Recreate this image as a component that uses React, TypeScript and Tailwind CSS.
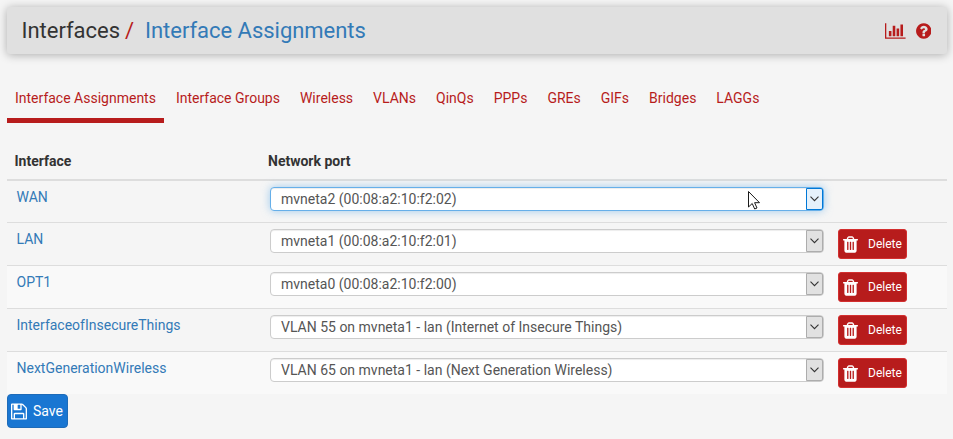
import React from 'react';

type Row = { name: string; port: string; focused?: boolean; deletable?: boolean; striped?: boolean };

const tabs = ['Interface Assignments', 'Interface Groups', 'Wireless', 'VLANs', 'QinQs', 'PPPs', 'GREs', 'GIFs', 'Bridges', 'LAGGs'];

const rows: Row[] = [
  { name: 'WAN', port: 'mvneta2 (00:08:a2:10:f2:02)', focused: true },
  { name: 'LAN', port: 'mvneta1 (00:08:a2:10:f2:01)', deletable: true },
  { name: 'OPT1', port: 'mvneta0 (00:08:a2:10:f2:00)', deletable: true, striped: true },
  { name: 'InterfaceofInsecureThings', port: 'VLAN 55 on mvneta1 - lan (Internet of Insecure Things)', deletable: true },
  { name: 'NextGenerationWireless', port: 'VLAN 65 on mvneta1 - lan (Next Generation Wireless)', deletable: true, striped: true },
];

const BarChartIcon = () => (
  <svg viewBox="0 0 2048 1792" className="h-[18px] w-[20.6px]" fill="currentColor">
    <path d="M640 896v512H384V896h256zm384-512v1024H768V384h256zm1024 1152v128H0V128h128v1408h1920zm-640-896v768h-256V640h256zm384-384v1152h-256V256h256z" />
  </svg>
);

const HelpIcon = () => (
  <svg viewBox="128 0 1536 1792" className="h-[18px] w-[15.5px]" fill="currentColor">
    <path d="M1024 1376v-192q0-14-9-23t-23-9H800q-14 0-23 9t-9 23v192q0 14 9 23t23 9h192q14 0 23-9t9-23zm256-672q0-88-55.5-163T1086 425t-170-41q-243 0-371 213-15 24 8 42l132 100q7 6 19 6 16 0 25-12 53-68 86-92 34-24 86-24 48 0 85.500 26t37.500 59q0 38-20 61t-68 45q-63 28-115.500 86.500T768 1020v36q0 14 9 23t23 9h192q14 0 23-9t9-23q0-19 21.500-49.500T1100 957q32-18 49-28.500t46-35 44.500-48 28-60.500 12.500-81zm384 192q0 209-103 385.500T1281.500 1561 896 1664t-385.500-103T231 1281.500 128 896t103-385.500T510.500 231 896 128t385.500 103T1561 510.500 1664 896z" />
  </svg>
);

const TrashIcon = () => (
  <svg viewBox="192 0 1408 1792" className="h-[19px] w-[15px]" fill="currentColor">
    <path d="M704 1376V672q0-14-9-23t-23-9h-64q-14 0-23 9t-9 23v704q0 14 9 23t23 9h64q14 0 23-9t9-23zm256 0V672q0-14-9-23t-23-9h-64q-14 0-23 9t-9 23v704q0 14 9 23t23 9h64q14 0 23-9t9-23zm256 0V672q0-14-9-23t-23-9h-64q-14 0-23 9t-9 23v704q0 14 9 23t23 9h64q14 0 23-9t9-23zM672 384h448l-48-117q-7-9-17-11H738q-10 2-17 11zm928 32v64q0 14-9 23t-23 9h-96v948q0 83-47 143.500t-113 60.500H480q-66 0-113-58.500T320 1464V512h-96q-14 0-23-9t-9-23v-64q0-14 9-23t23-9h309l70-167q15-37 54-63t79-26h320q40 0 79 26t54 63l70 167h309q14 0 23 9t9 23z" />
  </svg>
);

const SaveIcon = () => (
  <svg viewBox="128 0 1536 1792" className="h-[19px] w-4" fill="currentColor">
    <path d="M512 1536h768v-384H512v384zm896 0h128V640q0-14-10-38.500t-20-34.500l-281-281q-10-10-34-20t-39-10v416q0 40-28 68t-68 28H480q-40 0-68-28t-28-68V256H256v1280h128v-416q0-40 28-68t68-28h832q40 0 68 28t28 68v416zM1024 608V288q0-13-9.500-22.500T992 256H800q-13 0-22.500 9.500T768 288v320q0 13 9.500 22.500T800 640h192q13 0 22.500-9.500T1024 608zm640 32v928q0 40-28 68t-68 28H224q-40 0-68-28t-28-68V224q0-40 28-68t68-28h928q40 0 88 20t76 48l280 280q28 28 48 76t20 88z" />
  </svg>
);

const PortSelect = ({ port, focused }: { port: string; focused?: boolean }) => (
  <div
    className={`relative flex h-6 w-[554px] items-stretch rounded border bg-white ${
      focused
        ? 'border-[#66afe9] shadow-[inset_0_1px_1px_rgba(0,0,0,0.075),0_0_8px_rgba(102,175,233,0.6)]'
        : 'border-[#ccc] shadow-[inset_0_1px_1px_rgba(0,0,0,0.075)]'
    }`}
  >
    <span className="flex-1 pl-[10px] text-[14px] leading-[23px] text-[#555]">{port}</span>
    <span
      className={`flex w-[17px] items-center justify-center rounded-r-[2px] border ${
        focused ? 'border-[#0078d7] bg-[#e5f1fb]' : 'border-[#adadad] bg-[#e1e1e1]'
      }`}
    >
      <svg viewBox="0 0 9 6" className="h-1.5 w-[9px]" fill="none" stroke="#333" strokeWidth="1.1">
        <path d="M0.500 0.700L4.500 4.700L8.500 0.700" />
      </svg>
    </span>
    {focused && (
      <svg viewBox="0 0 12 20" className="absolute left-[477px] top-[3px] h-5 w-3" fill="#fff" stroke="#1a1a1a" strokeWidth="1">
        <path d="M0.500 0.500V16L4.200 12.500L6.700 18L9 17L6.600 11.700H11.500Z" />
      </svg>
    )}
  </div>
);

export default function App() {
  return (
    <div className="h-[439px] w-[953px] overflow-hidden bg-[#f5f5f5] pt-[7px] pr-[6px] pl-[7px] font-[Roboto,sans-serif] text-[14px] text-[#333]">
      <header className="flex h-[47px] items-center justify-between rounded-[3px] bg-[#e0e0e0] pl-[14.5px] pr-4 text-[22px] shadow-[0_1px_10px_rgba(0,0,0,0.3)]">
        <h1 className="flex leading-[26px] tracking-[-0.03px]">
          <span className="text-[#333]">Interfaces</span>
          <span className="ml-[5px] text-[#b71c1c]">/</span>
          <span className="ml-[11px] text-[#337ab7]">Interface Assignments</span>
        </h1>
        <div className="flex items-center gap-2.5 text-[#b71c1c]">
          <BarChartIcon />
          <HelpIcon />
        </div>
      </header>

      <nav className="mt-5 flex h-[49px] text-[#b71c1c]">
        {tabs.map((tab, i) => (
          <a
            key={tab}
            className={`border-b-[5px] pt-3.5 leading-5 whitespace-nowrap ${
              i === 0 ? 'mr-[3px] border-[#b71c1c] px-2' : 'mr-0.5 border-transparent px-[9px]'
            }`}
          >
            {tab}
          </a>
        ))}
      </nav>

      <section className="mt-[19px]">
        <div className="flex h-[39px] border-b-2 border-[#ddd] pt-[9px] pl-[7.5px] font-bold leading-5">
          <span className="w-[253.5px]">Interface</span>
          <span>Network port</span>
        </div>
        {rows.map((row, i) => (
          <div
            key={row.name}
            className={`flex items-start ${i === 0 ? 'h-[41px]' : 'h-[43px] border-t border-[#ddd]'} ${row.striped ? 'bg-[#f9f9f9]' : ''}`}
          >
            <span className="w-[263px] pt-1.5 pl-[9.5px] leading-5 text-[#337ab7]">{row.name}</span>
            <div className="pt-1.5">
              <PortSelect port={row.port} focused={row.focused} />
            </div>
            {row.deletable && (
              <button className="mt-1.5 ml-3.5 flex h-[30px] w-[69px] items-center rounded-[3px] border border-[#d32f2f] bg-[#b71c1c] pl-1 text-[12px] text-white">
                <TrashIcon />
                <span className="ml-2.5">Delete</span>
              </button>
            )}
          </div>
        ))}
      </section>

      <button className="flex h-[34px] w-[61px] items-center rounded border border-[#1e6bb8] bg-[#1976d2] pl-[3px] text-[14px] text-white">
        <SaveIcon />
        <span className="ml-1.5">Save</span>
      </button>
    </div>
  );
}
